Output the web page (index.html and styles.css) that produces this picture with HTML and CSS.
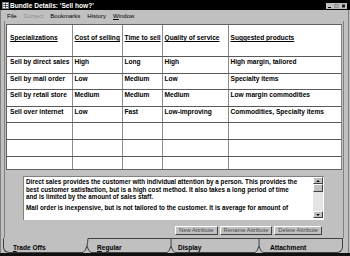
FILE: index.html
```html
<!DOCTYPE html>
<html lang="en">
<head>
  <meta charset="UTF-8">
  <title>Bundle Details</title>
  <link rel="stylesheet" href="styles.css">
</head>
<body>
  <div class="window">
    <!-- Title bar -->
    <div class="titlebar">
      <svg class="app-icon" viewBox="0 0 7 7" width="7" height="7">
        <rect x="0.5" y="0.5" width="6" height="6" fill="#fff" stroke="#808080"/>
        <path d="M1 2.5h5M1 4.5h5M3.5 1v5" stroke="#404040" stroke-width="0.8"/>
      </svg>
      <span class="title">Bundle Details: 'Sell how?'</span>
      <div class="caption-buttons">
        <span class="cap"><svg viewBox="0 0 7 6" width="7" height="6"><path d="M2 4.5h3" stroke="#000"/></svg></span>
        <span class="cap"><svg viewBox="0 0 7 6" width="7" height="6"><rect x="2" y="1.5" width="3" height="3" fill="none" stroke="#808080" stroke-width="0.8"/></svg></span>
        <span class="cap"><svg viewBox="0 0 7 6" width="7" height="6"><rect x="2" y="1.5" width="3" height="3" fill="#202020"/></svg></span>
      </div>
    </div>

    <!-- Menu bar -->
    <div class="menubar">
      <span>File</span>
      <span class="disabled">Correct</span>
      <span>Bookmarks</span>
      <span>History</span>
      <span><u>W</u>indow</span>
    </div>

    <div class="content">
      <!-- Attribute grid -->
      <div class="grid-wrap">
        <table class="grid">
          <colgroup>
            <col style="width:65px"><col style="width:50px"><col style="width:40px"><col style="width:66px"><col style="width:113px">
          </colgroup>
          <tr class="head">
            <th>Specializations</th>
            <th>Cost of selling</th>
            <th>Time to sell</th>
            <th>Quality of service</th>
            <th>Suggested products</th>
          </tr>
          <tr>
            <td>Sell by direct sales</td><td>High</td><td>Long</td><td>High</td><td>High margin, tailored</td>
          </tr>
          <tr>
            <td>Sell by mail order</td><td>Low</td><td>Medium</td><td>Low</td><td>Specialty items</td>
          </tr>
          <tr>
            <td>Sell by retail store</td><td>Medium</td><td>Medium</td><td>Medium</td><td>Low margin commodities</td>
          </tr>
          <tr>
            <td>Sell over internet</td><td>Low</td><td>Fast</td><td>Low-improving</td><td>Commodities, Specialty items</td>
          </tr>
          <tr><td></td><td></td><td></td><td></td><td></td></tr>
          <tr><td></td><td></td><td></td><td></td><td></td></tr>
          <tr><td></td><td></td><td></td><td></td><td></td></tr>
          <tr><td></td><td></td><td></td><td></td><td></td></tr>
        </table>
      </div>

      <!-- Description box -->
      <div class="notes">
        <div class="notes-text">
          <p>Direct sales provides the customer with individual attention by a person. This provides the<br>best customer satisfaction, but is a high cost method. It also takes a long period of time<br>and is limited by the amount of sales staff.</p>
          <p>Mail order is inexpensive, but is not tailored to the customer. It is average for amount of</p>
        </div>
        <div class="vscroll">
          <span class="sb-btn"><svg viewBox="0 0 9 6" width="9" height="6"><path d="M2.5 4h4L4.5 2z" fill="#000"/></svg></span>
          <span class="sb-thumb"></span>
          <span class="sb-track"></span>
          <span class="sb-btn"><svg viewBox="0 0 9 6" width="9" height="6"><path d="M2.5 2h4L4.5 4z" fill="#000"/></svg></span>
        </div>
      </div>

      <div class="actions">
        <button class="btn">New Attribute</button>
        <button class="btn">Rename Attribute</button>
        <button class="btn">Delete Attribute</button>
      </div>
    </div>

    <!-- Tabs -->
    <div class="tabs">
      <div class="tab tab-first active"><u>T</u>rade Offs</div>
      <svg class="tab-sep" viewBox="0 0 8 15" width="8" height="15">
        <path d="M5 0.5H8M5 0.5Q4.6 5 4 8M4 8Q2.5 13.5 0 14.5M4 8Q5.5 13.5 8 14.5" fill="none" stroke="#404040"/>
      </svg>
      <div class="tab"><u>R</u>egular</div>
      <svg class="tab-sep" viewBox="0 0 8 15" width="8" height="15">
        <path d="M0 0.5H8M4 0.5Q4.2 5 4 8M4 8Q2.5 13.5 0 14.5M4 8Q5.5 13.5 8 14.5" fill="none" stroke="#404040"/>
      </svg>
      <div class="tab">Display</div>
      <svg class="tab-sep" viewBox="0 0 8 15" width="8" height="15">
        <path d="M0 0.5H8M4 0.5Q4.2 5 4 8M4 8Q2.5 13.5 0 14.5M4 8Q5.5 13.5 8 14.5" fill="none" stroke="#404040"/>
      </svg>
      <div class="tab tab-last">Attachment</div>
    </div>
    <div class="bottom-bar"></div>
  </div>
</body>
</html>
```

FILE: styles.css
```css
body {
  margin: 0;
  font-family: "Liberation Sans", Arial, sans-serif;
  background-color: #c0c0c0;
}

.window {
  width: 350px;
  height: 256px;
  background-color: #c0c0c0;
  display: flex;
  flex-direction: column;
  overflow: hidden;
  box-shadow: inset 1px 0 #808080, inset -1px 0 #c0c0c0, inset -2px 0 #808080;
}

.titlebar {
  height: 10px;
  flex: none;
  background-color: #000;
  color: #fff;
  display: flex;
  align-items: center;
  padding: 0 3px 0 2px;
  font-size: 6.6px;
  font-weight: bold;
}

.app-icon {
  margin-right: 1px;
}

.title {
  flex: 1;
}

.caption-buttons {
  display: flex;
  margin-top: 1px;
}

.cap {
  width: 7px;
  height: 6px;
  background-color: #c0c0c0;
  display: block;
}

.cap svg {
  display: block;
}

.menubar {
  height: 11px;
  flex: none;
  display: flex;
  align-items: center;
  gap: 7px;
  padding-left: 7px;
  font-size: 6px;
  color: #000;
}

.menubar .disabled {
  color: #8a8a8a;
}

.content {
  flex: 1;
  display: flex;
  flex-direction: column;
  margin: 0 6px 0 4px;
  padding: 3px 1px 0 1px;
  border-left: 1px solid #808080;
  border-right: 1px solid #808080;
  min-height: 0;
}

.grid-wrap {
  height: 144px;
  flex: none;
  background-color: #fff;
  border: 1px solid #606060;
  border-right-color: #808080;
  overflow: hidden;
}

.grid {
  width: 334px;
  table-layout: fixed;
  border-collapse: collapse;
  font-size: 6.6px;
  font-weight: bold;
  color: #000;
}

.grid th,
.grid td {
  border-right: 1px solid #8c8c8c;
  border-bottom: 1px solid #5a5a5a;
  padding: 1px 2px 0 2px;
  vertical-align: top;
  text-align: left;
  white-space: nowrap;
  overflow: hidden;
  line-height: 8px;
  height: 14.6px;
}

.grid th:last-child,
.grid td:last-child {
  border-right: none;
}

.grid .head th {
  height: 22px;
  padding-top: 9px;
  padding-left: 2px;
  text-decoration: underline;
  vertical-align: top;
}

.grid td:first-child,
.grid th:first-child {
  padding-left: 3px;
}

.notes {
  height: 44px;
  width: 301px;
  flex: none;
  margin: 6px 0 0 17px;
  background-color: #fff;
  border-top: 1px solid #808080;
  border-left: 1px solid #808080;
  display: flex;
  box-sizing: border-box;
}

.notes-text {
  flex: 1;
  padding: 1px 0 0 2px;
  font-size: 6.3px;
  font-weight: bold;
  line-height: 7.6px;
  white-space: nowrap;
  overflow: hidden;
}

.notes-text p {
  margin: 0 0 3.5px 0;
}

.vscroll {
  width: 10px;
  margin: 0 1px 2px 0;
  display: flex;
  flex-direction: column;
}

.sb-btn {
  height: 7px;
  background-color: #c0c0c0;
  border: 1px solid;
  border-color: #fff #404040 #404040 #fff;
  box-sizing: border-box;
  display: flex;
  align-items: center;
  justify-content: center;
}

.sb-btn svg {
  display: block;
}

.sb-thumb {
  height: 8px;
  background-color: #c0c0c0;
  border: 1px solid;
  border-color: #fff #404040 #404040 #fff;
  box-sizing: border-box;
}

.sb-track {
  flex: 1;
  background-color: #e4e4e4;
}

.actions {
  display: flex;
  justify-content: flex-end;
  gap: 2px;
  margin: 6px 20px 0 0;
}

.btn {
  height: 9px;
  padding: 0 3px;
  font-family: "Liberation Sans", Arial, sans-serif;
  font-size: 5.8px;
  color: #4a4a4a;
  background-color: #c0c0c0;
  border: 1px solid;
  border-color: #fff #404040 #404040 #fff;
  line-height: 7px;
}

.tabs {
  height: 15px;
  flex: none;
  display: flex;
  padding: 0 7px 0 3px;
  font-size: 6.6px;
  font-weight: bold;
  color: #000;
}

.tab {
  width: 76px;
  box-sizing: border-box;
  padding: 5px 0 0 6px;
  border-top: 1px solid #404040;
  border-bottom: 1px solid #404040;
}

.tab.active {
  width: 80px;
  border-top-color: transparent;
  padding-left: 9px;
}

.tab-first {
  border-left: 1px solid #404040;
  border-bottom-left-radius: 6px;
}

.tab-last {
  width: 80px;
  padding-left: 7px;
  border-right: 1px solid #404040;
  border-bottom-right-radius: 6px;
}

.tab:nth-child(5) {
  width: 80px;
  padding-left: 3px;
}

.tab-sep {
  flex: none;
  display: block;
}

.bottom-bar {
  height: 3px;
  flex: none;
  background-color: #101010;
}
```
